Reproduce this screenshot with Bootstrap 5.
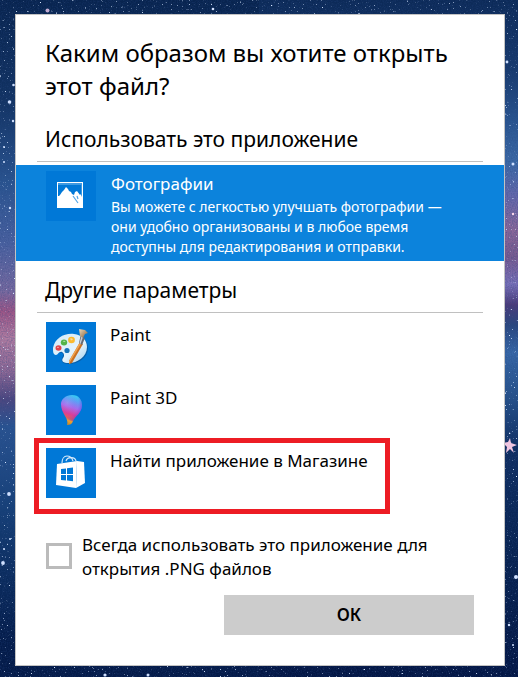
<!DOCTYPE html>
<html lang="ru">
<head>
<meta charset="utf-8">
<meta name="viewport" content="width=device-width, initial-scale=1">
<title>Каким образом вы хотите открыть этот файл?</title>
<link href="https://cdn.jsdelivr.net/npm/bootstrap@5.3.0/dist/css/bootstrap.min.css" rel="stylesheet">
<style>
body { font-family: "Noto Sans", "Open Sans", sans-serif; color: #000; background: #06214d; padding: 14px 13px 11px 15px; }
.wallpaper { z-index: -1; }
.dialog-box { border: 1px solid #c3c3c3; padding-bottom: 30px; }
.dialog-title { font-size: 24px; line-height: 33px; padding: 21px 29px 0; }
.section-title { font-size: 21px; line-height: 30px; margin: 0 21px; padding: 0 8px 7px; border-bottom: 1px solid #c0c0c0; }
.first-section { margin-top: 22px; }
.second-section { margin-top: 14px; }
.app-item { font-size: 17px; line-height: 26px; background: none; border: 5px solid transparent; border-bottom-width: 0; padding: 5px 7px 3px; gap: 14px; }
.app-list { margin: -1px 114px 0 18px; }
.app-item.highlighted { border: 5px solid #ed1c24; padding-bottom: 11px; }
.app-icon { width: 50px; height: 50px; flex: none; display: block; }
.selected-app { background: #0c83dc; color: #fff; border: 0; margin-top: 3px; padding: 6px 30px 4px; gap: 15px; min-height: 96px; }
.app-name { font-size: 17px; line-height: 26px; }
.app-note { font-size: 14px; line-height: 20px; }
.always-row { margin: 19px 30px 0; gap: 10px; }
.always-box { width: 26px; height: 26px; border: 3px solid #bbb; border-radius: 0 !important; margin: 10px 0 0; flex: none; }
.always-label { font-size: 17px; line-height: 24px; }
.ok-button { width: 250px; height: 40px; margin: 14px 30px 0 0; font-size: 17px; font-weight: 600; line-height: 24px; border: 0; border-radius: 0; background: #ccc; color: #000; }
</style>
<script src="https://cdn.jsdelivr.net/npm/bootstrap@5.3.0/dist/js/bootstrap.bundle.min.js"></script>
</head>
<body>
<svg class="wallpaper position-fixed top-0 start-0 w-100 h-100" viewBox="0 0 518 677" preserveAspectRatio="none" aria-hidden="true">
  <defs>
    <linearGradient id="skyLeft" x1="0" y1="0" x2="0" y2="1">
      <stop offset="0" stop-color="#08244f"/><stop offset=".15" stop-color="#123363"/><stop offset=".27" stop-color="#2a5490"/>
      <stop offset=".36" stop-color="#4a61a0"/><stop offset=".43" stop-color="#77699f"/><stop offset=".46" stop-color="#9b5586"/>
      <stop offset=".5" stop-color="#ae7ba0"/><stop offset=".55" stop-color="#8a6694"/><stop offset=".59" stop-color="#4d4780"/>
      <stop offset=".63" stop-color="#295391"/><stop offset=".75" stop-color="#164078"/><stop offset=".85" stop-color="#0b2c5e"/>
      <stop offset=".95" stop-color="#041c4a"/><stop offset="1" stop-color="#041a48"/>
    </linearGradient>
    <linearGradient id="skyRight" x1="0" y1="0" x2="0" y2="1">
      <stop offset="0" stop-color="#0c2a58"/><stop offset=".1" stop-color="#17396c"/><stop offset=".18" stop-color="#2a5590"/>
      <stop offset=".24" stop-color="#3c69a6"/><stop offset=".29" stop-color="#6568ab"/><stop offset=".34" stop-color="#8a6799"/>
      <stop offset=".38" stop-color="#775a90"/><stop offset=".42" stop-color="#7870b8"/><stop offset=".45" stop-color="#4b3b7a"/>
      <stop offset=".48" stop-color="#2b477f"/><stop offset=".52" stop-color="#3767a7"/><stop offset=".59" stop-color="#255089"/>
      <stop offset=".66" stop-color="#0f2e62"/><stop offset=".8" stop-color="#082452"/><stop offset="1" stop-color="#031644"/>
    </linearGradient>
    <filter id="stardust" x="0" y="0" width="1" height="1">
      <feTurbulence type="fractalNoise" baseFrequency=".55" numOctaves="2" seed="8"/>
      <feColorMatrix values="0 0 0 0 .68  0 0 0 0 .8  0 0 0 0 1  6 0 0 0 -4.2"/>
    </filter>
    <filter id="grain" x="0" y="0" width="1" height="1">
      <feTurbulence type="fractalNoise" baseFrequency=".8" numOctaves="2" seed="3"/>
      <feColorMatrix values="0 0 0 0 .02  0 0 0 0 .06  0 0 0 0 .22  2 0 0 0 -.8"/>
    </filter>
  </defs>
  <path fill="url(#skyLeft)" d="M0 0h260v677H0z"/>
  <path fill="url(#skyRight)" d="M259 0h259v677H259z"/>
  <path filter="url(#grain)" opacity=".4" d="M0 0h518v677H0z"/>
  <path filter="url(#stardust)" d="M0 0h518v677H0z"/>
  <g fill="#cfe0ff">
    <circle cx="47.500" cy="10.500" r="2" fill="#c0aad0"/><circle cx="213" cy="9" r="1.300"/><circle cx="13.500" cy="85" r="1.300"/><circle cx="9.500" cy="102" r="1.800"/>
    <circle cx="13" cy="121" r="1.200"/><circle cx="4" cy="147" r="1"/><circle cx="4" cy="162" r="1"/><circle cx="10" cy="208" r="1.200"/>
    <circle cx="9" cy="494" r="1.900"/><circle cx="3" cy="563" r="1.900"/><circle cx="10" cy="539" r="1"/><circle cx="4" cy="549" r="1"/>
    <circle cx="105" cy="675" r="1.600"/><circle cx="148" cy="675" r="1.500"/><circle cx="507" cy="62" r="1.400"/><circle cx="513" cy="164" r="1.500"/>
    <circle cx="513" cy="214" r="1.200" fill="#fbd8ea"/><circle cx="516" cy="577" r="2"/><circle cx="509" cy="625" r="1.200"/><circle cx="513" cy="645" r="1"/>
    <path fill="#efc5e0" d="M510 438l1 5 6 2-5 2 2 6-4-4-4 4 1-6-4-4 5-1z"/>
  </g>
</svg>

<main class="dialog-box bg-white">
  <h1 class="dialog-title fw-normal mb-0">Каким образом вы хотите открыть этот файл?</h1>

  <h2 class="section-title first-section fw-normal">Использовать это приложение</h2>
  <button type="button" class="selected-app d-flex w-100 text-start align-items-start">
    <svg class="app-icon" viewBox="0 0 50 50" aria-hidden="true">
      <path fill="#0078d7" d="M0 0h50v50H0z"/>
      <path fill="#fff" d="M11 11h26v26H11z"/>
      <path fill="#3d9ae2" d="M12 12h24v3H12z"/>
      <path fill="#0078d7" d="M12 14h23v9l-1 1-3-4-2 1-1 3-2-1-1-2-2-1-1-2-2-2-2 3-2 2-2 3-1 1h-1z"/>
      <path fill="#3d9ae2" d="M35 14h1v12l-1-2z"/>
      <path fill="none" stroke="#53a6e7" stroke-width="1.200" d="M27 25l5 7M31 25l1 3"/>
    </svg>
    <span class="d-flex flex-column">
      <span class="app-name">Фотографии</span>
      <span class="app-note">Вы можете с легкостью улучшать фотографии —<br>они удобно организованы и в любое время<br>доступны для редактирования и отправки.</span>
    </span>
  </button>

  <h2 class="section-title second-section fw-normal">Другие параметры</h2>
  <div class="app-list d-flex flex-column">
    <button type="button" class="app-item d-flex text-start align-items-start">
      <svg class="app-icon" viewBox="0 0 50 50" aria-hidden="true">
        <defs>
          <linearGradient id="palette" x1="0" y1="0" x2="1" y2="1"><stop offset="0" stop-color="#d5eaf8"/><stop offset=".6" stop-color="#e4f3fc"/><stop offset="1" stop-color="#9fcdec"/></linearGradient>
          <linearGradient id="bristle" x1="0" y1="0" x2="1" y2="1"><stop offset="0" stop-color="#f2dcb8"/><stop offset="1" stop-color="#7b5a3b"/></linearGradient>
        </defs>
        <path fill="#0078d7" d="M0 0h50v50H0z"/>
        <path fill="#0b4f8a" opacity=".6" d="M8 27C10 17 20 12 29 13c8 1 13 6 13 13 0 10-10 16-19 16-7 0-8-3-7-6 1-2 2-4 0-5-2-1-8 2-8-4z"/>
        <path fill="url(#palette)" d="M7 26C9 16 18 11 28 12c8 1 13 6 13 13 0 10-10 16-18 16-6 0-8-2-6-5 2-2 1-5-1-6-3-1-4 3-6 3-3 0-3-4-3-7z"/>
        <circle cx="21" cy="28.500" r="2.600" fill="#1673b9"/>
        <ellipse cx="12.500" cy="26" rx="3" ry="2.800" fill="#e34249"/><ellipse cx="18" cy="20.500" rx="3.200" ry="3" fill="#55b449"/><ellipse cx="25.500" cy="18" rx="3.400" ry="3.200" fill="#fbb92e"/>
        <path fill="#f9dba0" d="M24 16.500q2-1 3 1l-2 1z"/><path fill="#a6dc9a" d="M17 19q2-1 2.500 1h-2z"/><path fill="#f69a98" d="M11 25q2-1 2 1h-2z"/>
        <path fill="#ca7122" d="M34 20l3 2-11 19-3 1v-3z"/><path fill="#f0a450" d="M34 20l1.500 1L24 40l-1 2v-3z"/>
        <path fill="#656a75" d="M34.500 14l4.500 2-3 7-3-2z"/><path fill="#c8cdd4" d="M35.500 14l1.500 1-2.500 7-1-1z"/>
        <path fill="url(#bristle)" d="M33 7l6 1 3 3-3 1-2 4-3-2z"/>
      </svg>
      <span>Paint</span>
    </button>
    <button type="button" class="app-item d-flex text-start align-items-start">
      <svg class="app-icon" viewBox="0 0 50 50" aria-hidden="true">
        <defs>
          <linearGradient id="drop" x1=".65" y1="0" x2=".4" y2="1"><stop offset="0" stop-color="#31d1f2"/><stop offset=".2" stop-color="#619cf6"/><stop offset=".42" stop-color="#a66aec"/><stop offset=".65" stop-color="#dc3e97"/><stop offset=".78" stop-color="#e55a5c"/><stop offset=".88" stop-color="#eca02f"/><stop offset="1" stop-color="#c4892d"/></linearGradient>
          <radialGradient id="dropShade" cx=".3" cy=".3" r=".8"><stop offset="0" stop-color="#fff" stop-opacity=".12"/><stop offset=".65" stop-color="#8536e0" stop-opacity="0"/><stop offset="1" stop-color="#4c2bd8" stop-opacity=".6"/></radialGradient>
        </defs>
        <path fill="#0078d7" d="M0 0h50v50H0z"/>
        <path fill="url(#drop)" d="M26 10c7 0 10 5 10 10 0 8-7 11-9 16-1 3-3 4-6 4 1-3 0-6-2-9-2-4-4-7-4-12 0-5 5-9 11-9z"/>
        <path fill="url(#dropShade)" d="M26 10c7 0 10 5 10 10 0 8-7 11-9 16-4-1-6-2-8-5-2-4-4-7-4-12 0-5 5-9 11-9z"/>
      </svg>
      <span>Paint 3D</span>
    </button>
    <button type="button" class="app-item highlighted d-flex text-start align-items-start">
      <svg class="app-icon" viewBox="0 0 50 50" aria-hidden="true">
        <path fill="#0078d7" d="M0 0h50v50H0z"/>
        <path fill="none" stroke="#d5e9fa" stroke-width="1.200" d="M16 15c0-4 2-7 5-7s5 2 6 5M20 13c1-4 9-5 10 0"/>
        <path fill="#fff" d="M11 16l20-3-1 27-20-3z"/><path fill="#fff" d="M31 13l7 1 1 21-9 5z"/>
        <path fill="#0078d7" d="M15 21l5-.6V26h-5zM21 20.300l6-.8V26h-6zM15 27h5v5.500l-5-.5zM21 27h6v6.300l-6-.7z"/>
      </svg>
      <span>Найти приложение в Магазине</span>
    </button>
  </div>

  <div class="always-row d-flex align-items-start">
    <input class="always-box form-check-input" type="checkbox" id="always">
    <label class="always-label" for="always">Всегда использовать это приложение для<br>открытия .PNG файлов</label>
  </div>
  <div class="d-flex justify-content-end">
    <button type="button" class="ok-button btn p-0">ОК</button>
  </div>
</main>
</body>
</html>
